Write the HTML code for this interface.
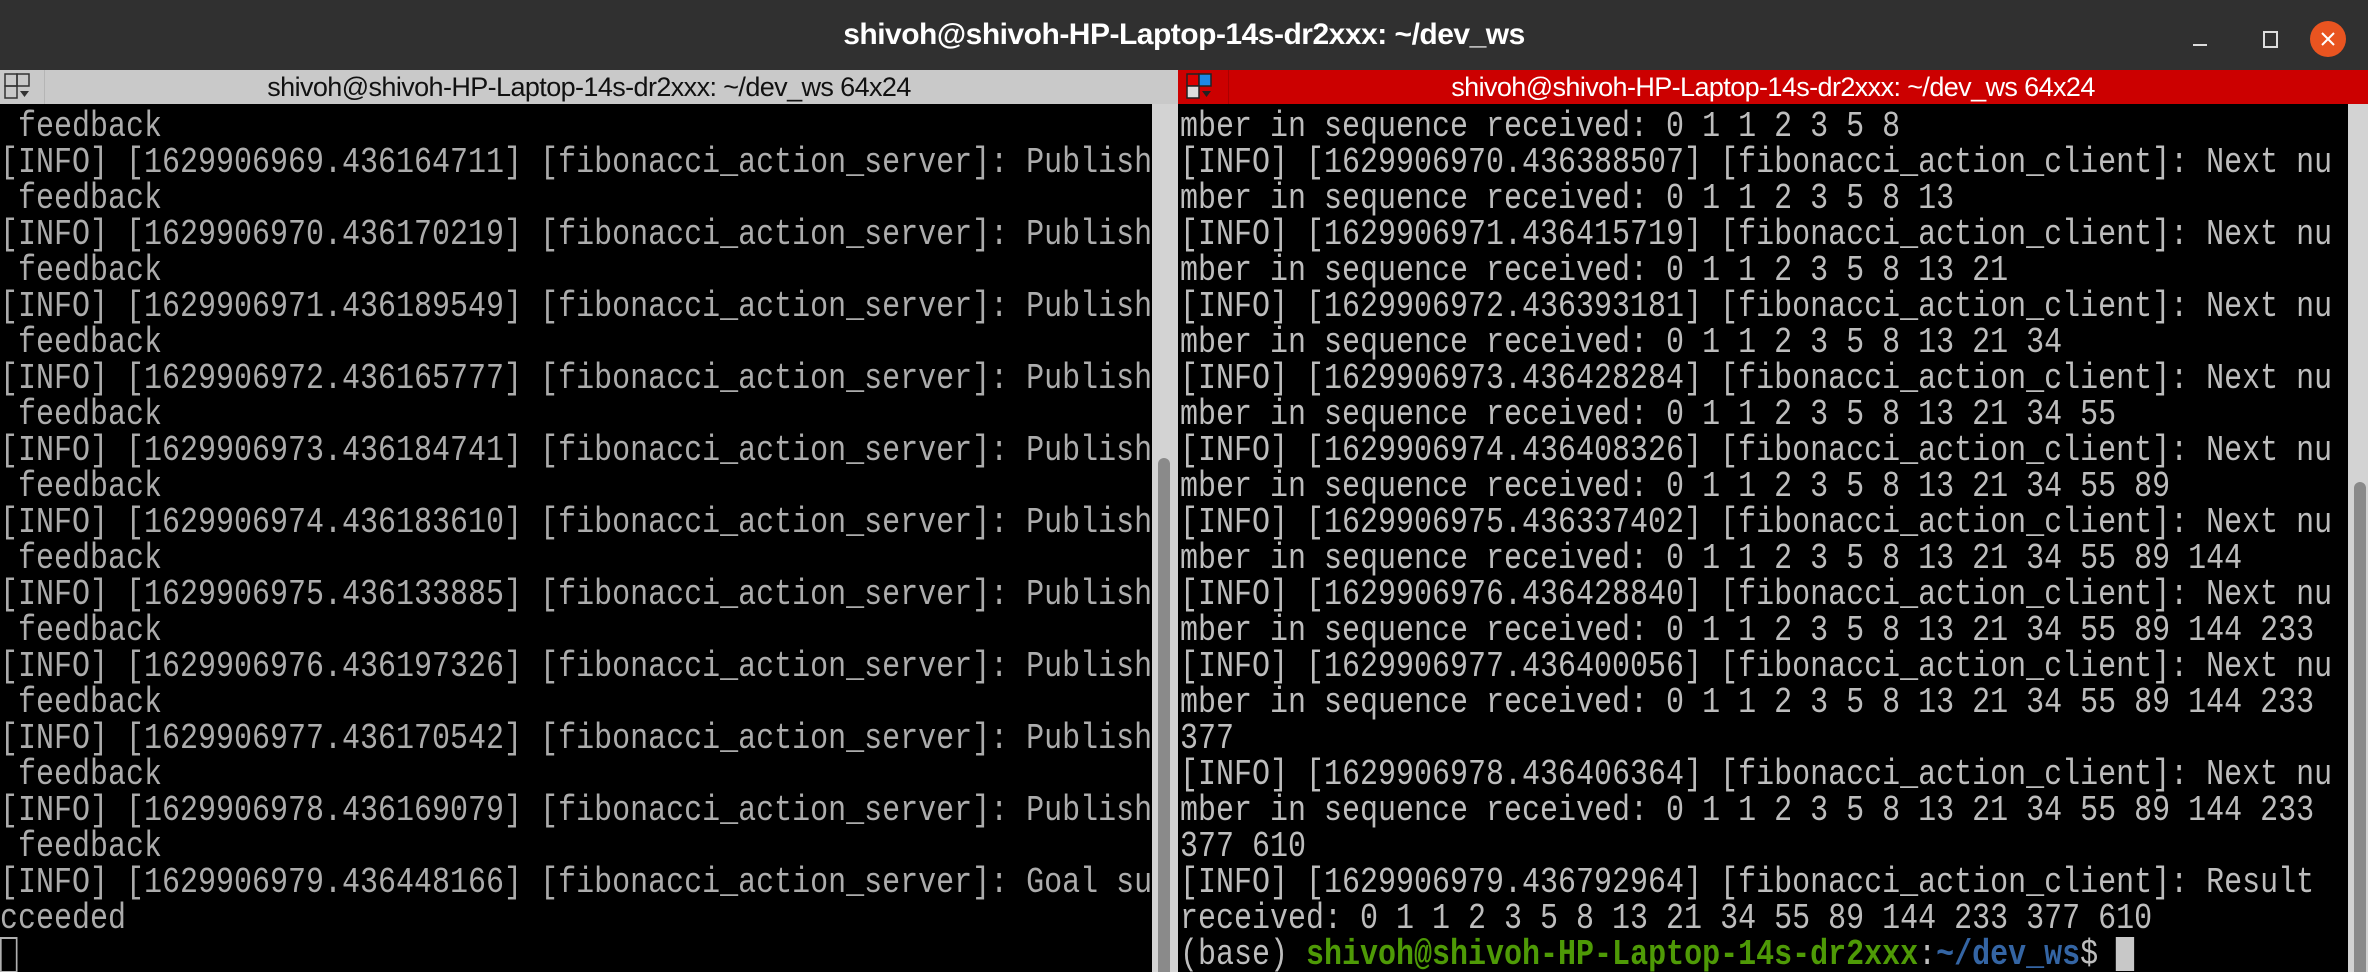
<!DOCTYPE html>
<html><head><meta charset="utf-8"><style>
html,body{margin:0;padding:0;width:2368px;height:972px;overflow:hidden;background:#000}
#title{position:absolute;left:0;top:0;width:2368px;height:70px;background:#303030;color:#fff;font:bold 30px "Liberation Sans",sans-serif;text-align:center;line-height:70px;letter-spacing:-0.5px}
.hdr{position:absolute;top:70px;height:34px;font:27px "Liberation Sans",sans-serif;text-align:center;line-height:34px;letter-spacing:-0.6px}
#lh{left:0;width:1178px;background:#c9c9c9;color:#111}
#rh{left:1178px;width:1190px;background:#cc0000;color:#fff}
pre{position:absolute;margin:0;font:36px/36px "Liberation Mono",monospace;white-space:pre;overflow:hidden;transform:scaleX(0.8333);transform-origin:0 0}
#lt{left:0;top:109px;width:1382px;height:863px;color:#acacac}
#rt{left:1180px;top:109px;width:1400px;height:863px;color:#bdbdbd}
.trough{position:absolute;top:104px;background:#d3d3d3}
.thumb{position:absolute;background:#8a8a8a;border-radius:6px 6px 0 0}
.g{color:#4e9a06;font-weight:bold}.b{color:#3465a4;font-weight:bold}
.cur{display:inline-block;width:21.6px;height:34px;background:#c8c8c8;vertical-align:top}
</style></head><body>
<div id="title">shivoh@shivoh-HP-Laptop-14s-dr2xxx: ~/dev_ws</div>
<svg style="position:absolute;left:2180px;top:20px" width="180" height="40">
<rect x="13" y="24" width="14" height="2" fill="#ddd"/>
<rect x="84" y="12" width="13" height="15" fill="none" stroke="#ddd" stroke-width="2"/>
<circle cx="148" cy="19" r="18" fill="#e95420"/>
<path d="M142 13 L154 25 M154 13 L142 25" stroke="#fff" stroke-width="2"/>
</svg>
<div class="hdr" id="lh">shivoh@shivoh-HP-Laptop-14s-dr2xxx: ~/dev_ws 64x24</div>
<div class="hdr" id="rh">shivoh@shivoh-HP-Laptop-14s-dr2xxx: ~/dev_ws 64x24</div>
<svg style="position:absolute;left:4px;top:73px" width="30" height="28">
<rect x="1" y="1" width="12" height="12" fill="none" stroke="#333" stroke-width="1.5"/>
<rect x="13" y="1" width="12" height="12" fill="none" stroke="#333" stroke-width="1.5"/>
<rect x="1" y="13" width="12" height="12" fill="none" stroke="#333" stroke-width="1.5"/>
<path d="M16 18 L25 18 L20.5 24Z" fill="#333"/>
</svg>
<div style="position:absolute;left:44px;top:70px;width:1px;height:34px;background:#b5b5b5"></div>
<svg style="position:absolute;left:1186px;top:73px" width="30" height="28">
<rect x="1" y="1" width="12" height="12" fill="#d00" stroke="#222" stroke-width="1.5"/>
<rect x="13" y="1" width="12" height="12" fill="#1e88e5" stroke="#222" stroke-width="1.5"/>
<rect x="1" y="13" width="12" height="12" fill="#ddd" stroke="#222" stroke-width="1.5"/>
<path d="M16 18 L25 18 L20.5 24Z" fill="#222"/>
</svg>
<div style="position:absolute;left:1228px;top:70px;width:1px;height:34px;background:#aa0000"></div>
<pre id="lt"> feedback
[INFO] [1629906969.436164711] [fibonacci_action_server]: Publish
 feedback
[INFO] [1629906970.436170219] [fibonacci_action_server]: Publish
 feedback
[INFO] [1629906971.436189549] [fibonacci_action_server]: Publish
 feedback
[INFO] [1629906972.436165777] [fibonacci_action_server]: Publish
 feedback
[INFO] [1629906973.436184741] [fibonacci_action_server]: Publish
 feedback
[INFO] [1629906974.436183610] [fibonacci_action_server]: Publish
 feedback
[INFO] [1629906975.436133885] [fibonacci_action_server]: Publish
 feedback
[INFO] [1629906976.436197326] [fibonacci_action_server]: Publish
 feedback
[INFO] [1629906977.436170542] [fibonacci_action_server]: Publish
 feedback
[INFO] [1629906978.436169079] [fibonacci_action_server]: Publish
 feedback
[INFO] [1629906979.436448166] [fibonacci_action_server]: Goal su
cceeded
<span style="display:inline-block;width:17px;height:32px;border:2px solid #b0b0b0;vertical-align:top"></span></pre>
<pre id="rt">mber in sequence received: 0 1 1 2 3 5 8
[INFO] [1629906970.436388507] [fibonacci_action_client]: Next nu
mber in sequence received: 0 1 1 2 3 5 8 13
[INFO] [1629906971.436415719] [fibonacci_action_client]: Next nu
mber in sequence received: 0 1 1 2 3 5 8 13 21
[INFO] [1629906972.436393181] [fibonacci_action_client]: Next nu
mber in sequence received: 0 1 1 2 3 5 8 13 21 34
[INFO] [1629906973.436428284] [fibonacci_action_client]: Next nu
mber in sequence received: 0 1 1 2 3 5 8 13 21 34 55
[INFO] [1629906974.436408326] [fibonacci_action_client]: Next nu
mber in sequence received: 0 1 1 2 3 5 8 13 21 34 55 89
[INFO] [1629906975.436337402] [fibonacci_action_client]: Next nu
mber in sequence received: 0 1 1 2 3 5 8 13 21 34 55 89 144
[INFO] [1629906976.436428840] [fibonacci_action_client]: Next nu
mber in sequence received: 0 1 1 2 3 5 8 13 21 34 55 89 144 233
[INFO] [1629906977.436400056] [fibonacci_action_client]: Next nu
mber in sequence received: 0 1 1 2 3 5 8 13 21 34 55 89 144 233
377
[INFO] [1629906978.436406364] [fibonacci_action_client]: Next nu
mber in sequence received: 0 1 1 2 3 5 8 13 21 34 55 89 144 233
377 610
[INFO] [1629906979.436792964] [fibonacci_action_client]: Result
received: 0 1 1 2 3 5 8 13 21 34 55 89 144 233 377 610
(base) <span class="g">shivoh@shivoh-HP-Laptop-14s-dr2xxx</span>:<span class="b">~/dev_ws</span>$ <span class="cur"></span></pre>
<div class="trough" style="left:1152px;width:26px;height:868px"></div>
<div class="thumb" style="left:1158px;top:458px;width:12px;height:514px"></div>
<div class="trough" style="left:2348px;width:20px;height:868px"></div>
<div class="thumb" style="left:2354px;top:482px;width:12px;height:490px"></div>
</body></html>
